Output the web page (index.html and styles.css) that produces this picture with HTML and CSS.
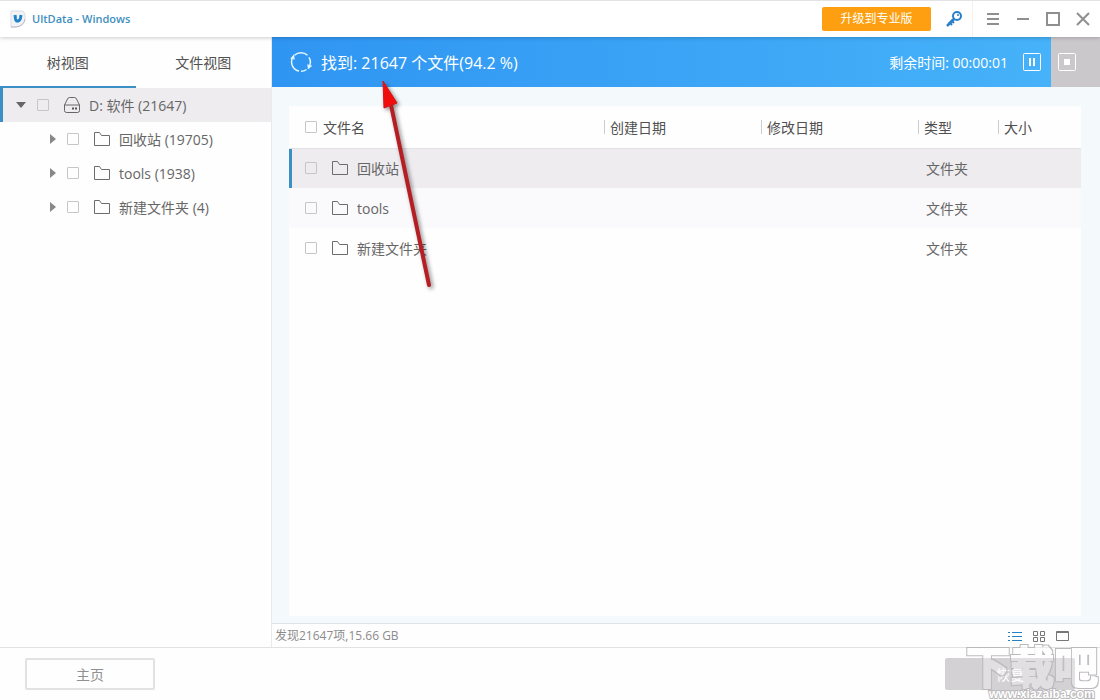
FILE: index.html
```html
<!DOCTYPE html>
<html lang="zh-CN">
<head>
<meta charset="utf-8">
<title>UltData - Windows</title>
<link rel="stylesheet" href="styles.css">
</head>
<body>
<svg class="defs" aria-hidden="true">
  <symbol id="folder" viewBox="0 0 18 16"><path d="M1.5 14.5V1.5H6.5L8.5 4.5H16.500V14.500Z" fill="none" stroke="#6c6c6c" stroke-width="1"/></symbol>
  <symbol id="right" viewBox="0 0 6 12"><path d="M0 1L6 6L0 11Z" fill="#888"/></symbol>
  <filter id="outline" x="-10%" y="-10%" width="120%" height="120%">
    <feMorphology in="SourceAlpha" operator="dilate" radius="2" result="outer"/>
    <feMorphology in="SourceAlpha" operator="dilate" radius="1" result="inner"/>
    <feComposite in="outer" in2="inner" operator="out" result="ring"/>
    <feFlood flood-color="#bbb9bc"/>
    <feComposite in2="ring" operator="in" result="line"/>
    <feFlood flood-color="#fff" flood-opacity=".3"/>
    <feComposite in2="inner" operator="in" result="body"/>
    <feMerge><feMergeNode in="body"/><feMergeNode in="line"/></feMerge>
  </filter>
</svg>

<header class="titlebar">
  <svg class="logo" viewBox="0 0 16 18">
    <path d="M1 1H11Q15 1 15 6V9Q14 16 6 17H1Z" fill="#f1f3f6" stroke="#dcdde2"/>
    <path d="M1 17H6Q14 16 15 9" fill="none" stroke="#b9bcc4"/>
    <path d="M5 5L5.500 9Q6 11.500 8 11Q10 10.500 10.500 8L11 5" fill="none" stroke="#2382c8" stroke-width="3"/>
  </svg>
  <h1 class="app-name">UltData - Windows</h1>
  <button class="upgrade">升级到专业版</button>
  <button class="icon-btn key" aria-label="注册">
    <svg width="18" height="18" viewBox="0 0 18 18" fill="none" stroke="#2a7fc9">
      <circle cx="12" cy="6" r="4" stroke-width="2"/><circle cx="13" cy="5" r="1" fill="#2a7fc9" stroke="none"/>
      <path d="M9 9L2 16" stroke-width="2.500"/><path d="M4 12L7 15M6 10L9 13" stroke-width="2"/>
    </svg>
  </button>
  <div class="window-controls">
    <button class="icon-btn" aria-label="菜单"><svg width="14" height="14" viewBox="0 0 14 14"><path d="M1 2H13M1 7H13M1 12H13" stroke="#8f8f8f" stroke-width="2"/></svg></button>
    <button class="icon-btn" aria-label="最小化"><svg width="14" height="14" viewBox="0 0 14 14"><path d="M1 7H13" stroke="#8f8f8f" stroke-width="2"/></svg></button>
    <button class="icon-btn" aria-label="最大化"><svg width="14" height="14" viewBox="0 0 14 14"><rect x="1" y="1" width="12" height="12" fill="none" stroke="#8f8f8f" stroke-width="2"/></svg></button>
    <button class="icon-btn" aria-label="关闭"><svg width="14" height="14" viewBox="0 0 14 14"><path d="M1 1L13 13M13 1L1 13" stroke="#8f8f8f" stroke-width="2"/></svg></button>
  </div>
</header>

<div class="workspace">
  <aside class="sidebar">
    <nav class="tabs">
      <button class="tab active">树视图</button>
      <button class="tab">文件视图</button>
    </nav>
    <ul class="tree">
      <li class="node root">
        <svg class="twist down" viewBox="0 0 10 6"><path d="M0 0H10L5 6Z" fill="#666"/></svg>
        <input type="checkbox" id="n0">
        <svg class="drive" viewBox="0 0 18 18" fill="none" stroke="#666"><path d="M1.500 9V14.500Q1.500 16.500 3.500 16.500H14.500Q16.500 16.500 16.500 14.500V9L13.500 3Q13 1.500 11.500 1.500H6.500Q5 1.500 4.500 3L1.500 9H16.500"/><path d="M9 12.500H11M12 12.500H14" stroke-width="2" stroke="#555"/></svg>
        <label for="n0">D: 软件 (21647)</label>
      </li>
      <li class="node"><svg class="twist right"><use href="#right"/></svg><input type="checkbox" id="n1"><svg class="folder"><use href="#folder"/></svg><label for="n1">回收站 (19705)</label></li>
      <li class="node"><svg class="twist right"><use href="#right"/></svg><input type="checkbox" id="n2"><svg class="folder"><use href="#folder"/></svg><label for="n2">tools (1938)</label></li>
      <li class="node"><svg class="twist right"><use href="#right"/></svg><input type="checkbox" id="n3"><svg class="folder"><use href="#folder"/></svg><label for="n3">新建文件夹 (4)</label></li>
    </ul>
  </aside>

  <main class="main">
    <section class="scan">
      <div class="scan-done">
        <svg class="spinner" viewBox="0 0 22 22" fill="none" stroke="#e4f6ff" stroke-width="1.500">
          <path d="M9 20.100A9.300 9.300 0 0 1 2.500 7"/><path d="M4.500 4.300A9.300 9.300 0 0 1 17.500 4.300"/><path d="M19 6.300A9.300 9.300 0 0 1 18.500 16.500"/><path d="M16.500 18.500A9.300 9.300 0 0 1 11 20.300"/>
          <path d="M1 8L3.500 5L4 8.500M18 13.500L18.500 17L21.500 14.500"/>
        </svg>
        <span class="found">找到: 21647 个文件(94.2 %)</span>
        <span class="remaining">剩余时间: 00:00:01</span>
        <button class="icon-btn" aria-label="暂停"><svg width="18" height="18" viewBox="0 0 18 18"><rect x=".5" y=".5" width="17" height="17" rx="1" fill="none" stroke="#fff"/><path d="M7 5V13M11 5V13" stroke="#fff" stroke-width="2"/></svg></button>
      </div>
      <div class="scan-rest">
        <button class="icon-btn" aria-label="停止"><svg width="18" height="18" viewBox="0 0 18 18"><rect x=".5" y=".5" width="17" height="17" rx="1" fill="none" stroke="#fff"/><rect x="6" y="6" width="6" height="6" fill="#fff"/></svg></button>
      </div>
    </section>

    <section class="content">
      <div class="panel">
        <table class="files">
          <colgroup><col><col class="c-date"><col class="c-date"><col class="c-type"><col class="c-size"></colgroup>
          <thead>
            <tr>
              <th><div class="all"><input type="checkbox" id="all"><label for="all">文件名</label></div></th>
              <th><span class="sep">创建日期</span></th>
              <th><span class="sep">修改日期</span></th>
              <th><span class="sep">类型</span></th>
              <th><span class="sep">大小</span></th>
            </tr>
          </thead>
          <tbody>
            <tr class="selected"><td><div class="name"><input type="checkbox" id="f1"><svg class="folder"><use href="#folder"/></svg><label for="f1">回收站</label></div></td><td></td><td></td><td>文件夹</td><td></td></tr>
            <tr class="alt"><td><div class="name"><input type="checkbox" id="f2"><svg class="folder"><use href="#folder"/></svg><label for="f2">tools</label></div></td><td></td><td></td><td>文件夹</td><td></td></tr>
            <tr><td><div class="name"><input type="checkbox" id="f3"><svg class="folder"><use href="#folder"/></svg><label for="f3">新建文件夹</label></div></td><td></td><td></td><td>文件夹</td><td></td></tr>
          </tbody>
        </table>
      </div>
    </section>

    <div class="status">
      <span>发现21647项,15.66 GB</span>
      <div class="views">
        <button class="icon-btn" aria-label="列表"><svg width="14" height="12" viewBox="0 0 14 12"><path d="M0 2.500H2M4 2.500H14M0 6.500H2M4 6.500H14M0 10.500H2M4 10.500H14" stroke="#2583c4"/></svg></button>
        <button class="icon-btn" aria-label="图标"><svg width="12" height="12" viewBox="0 0 12 12" fill="none" stroke="#777"><path d="M.5 1.500H4.500V5.500H.5ZM7.500 1.500H11.500V5.500H7.500ZM.5 7.500H4.500V11.500H.5ZM7.500 7.500H11.500V11.500H7.500Z"/></svg></button>
        <button class="icon-btn" aria-label="预览"><svg width="14" height="12" viewBox="0 0 14 12" fill="none" stroke="#777"><path d="M.5 1.500H12.500V10.500H.5ZM.5 2.500H12.500"/></svg></button>
      </div>
    </div>
  </main>
</div>

<footer class="footer">
  <button class="home">主页</button>
  <button class="recover">恢复</button>
</footer>

<svg class="pointer" width="70" height="220" viewBox="0 0 70 220" aria-hidden="true">
  <path d="M18 26L56 206" stroke="#b51f24" stroke-width="4" stroke-linecap="round"/>
  <path d="M10 2L11 29L24 24Z" fill="#f20d0d" stroke="#d41414"/>
</svg>
<svg class="watermark" width="136" height="60" viewBox="0 0 136 60" aria-hidden="true">
  <text class="mark-name" x="2" y="44" filter="url(#outline)">下载吧</text>
  <text class="mark-url" x="25" y="58">www.xiazaiba.com</text>
</svg>
</body>
</html>
```
FILE: styles.css
```css
* { box-sizing: border-box; }
body {
  margin: 0;
  height: 100vh;
  position: relative;
  display: flex;
  flex-direction: column;
  overflow: hidden;
  background: #fefefe;
  color: #666;
  font: 14px/20px "Open Sans", "Noto Sans CJK SC", sans-serif;
}
button, input { margin: 0; font: inherit; }
button { cursor: pointer; }
.defs { position: absolute; width: 0; height: 0; }
svg { display: block; flex: none; }

input[type="checkbox"] {
  appearance: none;
  flex: none;
  width: 12px;
  height: 12px;
  border: 1px solid #c6c6c6;
  border-radius: 1px;
}
input[type="checkbox"]:checked { background: #2f8fd0; }
.icon-btn { padding: 0; border: 0; background: none; }
.folder { width: 18px; height: 16px; }

.titlebar {
  flex: none;
  position: relative;
  z-index: 1;
  display: flex;
  align-items: center;
  height: 37px;
  padding: 0 10px;
  background: #fff;
  border-top: 1px solid #e4e2e6;
  box-shadow: 0 1px 4px rgba(0, 0, 0, .2);
}
.logo { width: 16px; height: 18px; }
.app-name {
  margin: 0 auto 0 6px;
  font-size: 11px;
  font-weight: 600;
  color: #3e8fc0;
}
.upgrade {
  width: 109px;
  height: 24px;
  padding: 0;
  border: 0;
  border-radius: 2px;
  background: #fd9f10;
  color: #fff;
  font-size: 12px;
  line-height: 24px;
}
.key { margin: 0 9px 0 14px; }
.window-controls {
  display: flex;
  align-items: center;
  gap: 16px;
  height: 36px;
  padding-left: 13px;
  border-left: 1px solid #f1f1f1;
}

.workspace { flex: 1; display: flex; min-height: 0; }
.sidebar { flex: none; width: 272px; border-right: 1px solid #e6ebee; }
.tabs { display: flex; height: 51px; }
.tab {
  flex: 1;
  padding: 2px 0 0;
  border: 0;
  border-bottom: 2px solid transparent;
  background: none;
  color: #505050;
}
.tab.active { border-bottom-color: #3a8fc4; }
.tree { margin: 0; padding: 0; list-style: none; }
.node {
  display: flex;
  align-items: center;
  height: 34px;
  padding-left: 50px;
}
.node.root {
  padding-left: 13px;
  border-left: 3px solid #3a8fc4;
  background: #eeecef;
}
.twist.down { width: 10px; height: 6px; margin-right: 11px; }
.twist.right { width: 6px; height: 12px; margin-right: 11px; }
.drive { width: 18px; height: 18px; margin: 0 8px 0 14px; }
.node .folder { margin: 0 8px 0 14px; }
label { padding-top: 2px; }

.main { flex: 1; min-width: 0; display: flex; flex-direction: column; }
.scan { flex: none; display: flex; height: 50px; background: #cac8cb; color: #fff; }
.scan-done {
  flex: 1;
  display: flex;
  align-items: center;
  padding: 0 10px 0 18px;
  background: linear-gradient(90deg, #2f95f2, #46b2f9);
}
.scan-rest { display: flex; align-items: center; width: 49px; padding-left: 7px; }
.spinner { width: 22px; height: 22px; }
.found { margin: 0 auto 0 9px; padding-top: 2px; font-size: 16px; }
.remaining { margin-right: 15px; padding-top: 2px; }

.content { flex: 1; min-height: 0; padding: 19px 19px 7px 17px; background: #f4f9fc; }
.panel { height: 100%; background: #fefefe; }
.files { width: 100%; table-layout: fixed; border-collapse: collapse; }
.c-date { width: 157px; }
.c-type { width: 80px; }
.c-size { width: 83px; }
.files th {
  height: 42px;
  padding: 0;
  border-bottom: 1px solid #e2e2e2;
  color: #505050;
  font-weight: 400;
  text-align: left;
}
.files td { height: 40px; padding: 2px 0 0 8px; }
.files td:first-child { padding: 0 0 0 16px; }
.files .selected { background: #eeecef; }
.files .selected td:first-child { box-shadow: inset 3px 0 #3a8fc4; }
.files .alt { background: #faf9fb; }
.all { display: flex; align-items: center; gap: 6px; padding-left: 16px; }
.name { display: flex; align-items: center; }
.name .folder { margin: 0 8px 0 14px; }
.sep {
  display: block;
  height: 14px;
  padding-left: 5px;
  border-left: 1px solid #ccc;
  line-height: 16px;
}

.status {
  flex: none;
  display: flex;
  align-items: center;
  justify-content: space-between;
  height: 24px;
  padding: 0 30px 0 3px;
  border-top: 1px solid #dce4e9;
  color: #8c8c8c;
  font-size: 12px;
}
.views { display: flex; align-items: center; gap: 11px; }

.footer {
  flex: none;
  display: flex;
  align-items: center;
  justify-content: space-between;
  height: 53px;
  padding: 0 25px;
  border-top: 1px solid #e2e2e2;
}
.footer button { width: 130px; height: 32px; padding: 2px 0 0; border-radius: 2px; }
.home { border: 2px solid #e2e2e2; background: #fefefe; color: #909090; }
.recover { border: 0; background: #d4d1d5; color: #fff; }

.pointer {
  position: absolute;
  left: 373px;
  top: 79px;
  z-index: 2;
  filter: drop-shadow(2px 2px 2px rgba(0, 0, 0, .45));
  pointer-events: none;
}
.watermark {
  position: absolute;
  right: 0;
  bottom: 0;
  z-index: 2;
  overflow: visible;
  pointer-events: none;
}
.mark-name {
  font: 700 44px "Noto Sans CJK SC", sans-serif;
}
.mark-url {
  font: 700 12px "Liberation Sans", sans-serif;
  fill: #fff;
  stroke: #bbb9bc;
  stroke-width: 2px;
  paint-order: stroke;
}
```
